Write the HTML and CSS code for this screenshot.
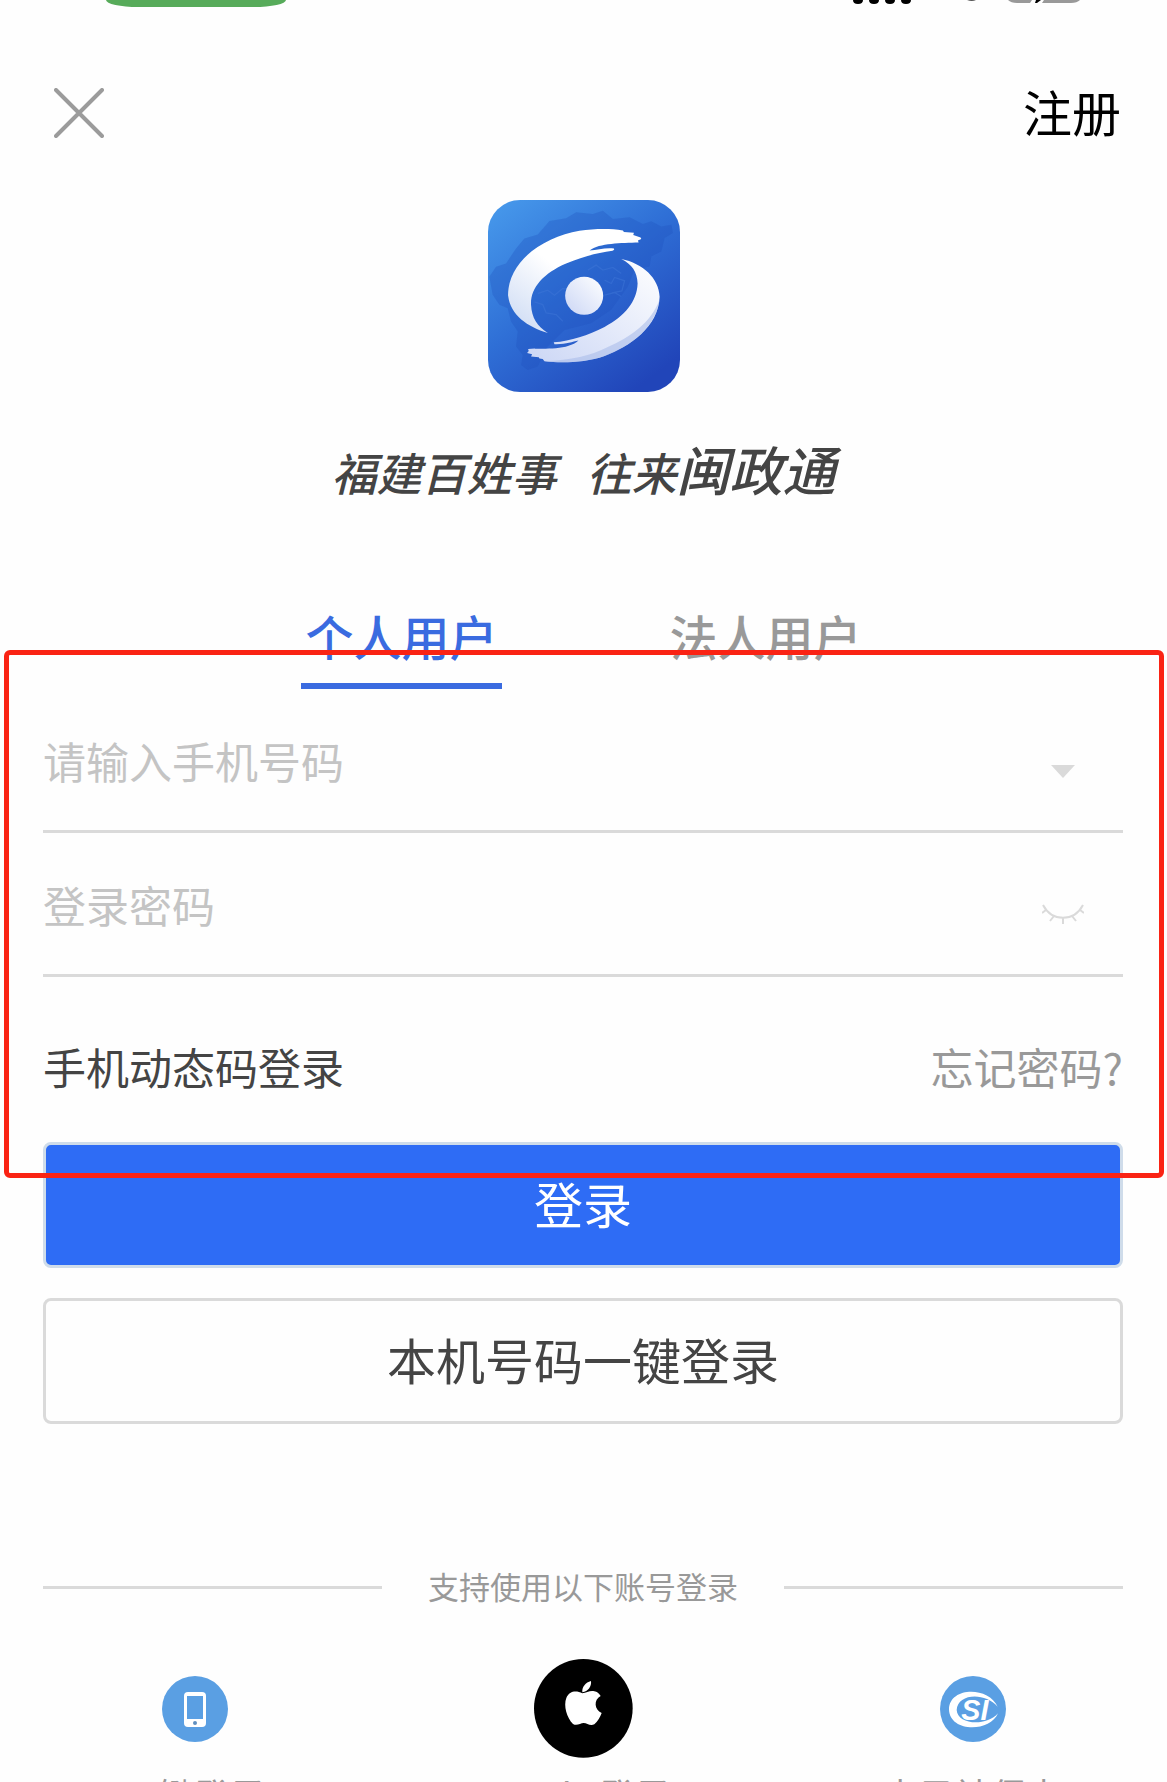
FILE: index.html
```html
<!DOCTYPE html>
<html lang="zh-CN">
<head>
  <meta charset="UTF-8" />
  <meta name="viewport" content="width=device-width, initial-scale=1.0" />
  <title>闽政通 登录</title>
  <link rel="stylesheet" href="styles.css">
</head>

<body>
  <div class="screen">
    <!-- Status bar -->
    <div class="status-bar">
      <span class="call-pill"></span>
      <svg class="status-icons" width="228" height="5" viewBox="0 0 228 5" aria-hidden="true">
        <path d="M0 0h10q0 4-5 4t-5-4zM16 0h10q0 4-5 4t-5-4zM32 0h10q0 4-5 4t-5-4zM48 0h10q0 4-5 4t-5-4z" fill="#000"/>
        <path d="M114 0h9q-4 2-9 0z" fill="#555"/>
        <path d="M155 0h24l-2 3h-13q-6 0-9-3zM191 0h36q-3 3-9 3h-29z" fill="#999"/>
        <path d="M183 0h5l-4 3h-2z" fill="#000"/>
      </svg>
    </div>

    <!-- Top bar -->
    <header class="top-bar">
      <button class="close-btn" type="button" aria-label="关闭">
        <svg width="50" height="50" viewBox="0 0 50 50"><path d="M2 2l46 46M48 2L2 48" stroke="#9b9b9b" stroke-width="4" stroke-linecap="round"/></svg>
      </button>
      <a class="register" href="#">注册</a>
    </header>

    <!-- Brand -->
    <div class="brand">
      <svg class="logo" viewBox="51 60 575 575" aria-hidden="true">
        <defs>
          <linearGradient id="bg" x1="0" y1="0" x2="0.75" y2="1">
            <stop offset="0" stop-color="#489bec"/>
            <stop offset="0.5" stop-color="#2f6fd6"/>
            <stop offset="1" stop-color="#2145b9"/>
          </linearGradient>
          <linearGradient id="top" x1="1" y1="0" x2="0" y2="1">
            <stop offset="0.5" stop-color="#fff"/>
            <stop offset="1" stop-color="#c9d8f3"/>
          </linearGradient>
          <linearGradient id="bottom" x1="1" y1="0" x2="0" y2="1">
            <stop offset="0" stop-color="#fff"/>
            <stop offset="1" stop-color="#cbd6f5"/>
          </linearGradient>
        </defs>
        <rect x="51" y="60" width="575" height="575" rx="96" fill="url(#bg)"/>
        <path d="M55 290l20-30 30-10 30-45 25-30 40-12 35-40 50-8 30-18 50 5 30-10 30 25 50-5 40 20 25-8 30 15 30-5 5 25-25 15-10 40-30 15-5 30-45 10-20 50-50 70-60 40-80 20-50 50-30 60-30 10-20-15 5-30-20-25 5-45-20-30-10-40-25-10-20-30z" fill="#1d4fbe" opacity="0.3"/>
        <path d="M200 340l30-10 20 15 25-20 30 5M350 270l25-15 20 15 30-8 25 18M400 300l20 10 10-18 30 10-8 30-30 6M190 365l25 8 10 25 30 5 20 20M400 345l30-8 20 12" fill="none" stroke="#3d76d8" stroke-width="4" opacity="0.5"/>
        <path d="M230 458C170 440 118 405 111 345C112 240 220 170 325 152C370 146 415 145 455 151L458 156L488 158L486 165L508 172L510 177L500 181L502 187C450 189 385 188 355 211C380 210 400 202 428 205Q431 210 424 212C375 218 330 232 285 250C215 280 177 325 180 375C182 412 198 438 230 458Z" fill="url(#top)"/>
        <path d="M450 237C515 250 563 295 565 350C562 440 475 500 400 527C340 548 270 549 220 543L215 536L205 535L203 531L180 529L183 522L168 518L173 512L171 506C225 505 290 510 322 481C302 485 285 493 250 492L248 486C300 482 350 465 400 440C460 408 497 365 499 310C498 275 482 253 450 237Z" fill="url(#bottom)"/>
        <path d="M564 360C555 440 475 500 400 527C340 548 270 549 220 543C300 540 360 525 410 500C480 470 540 425 564 360Z" fill="#aabce9" opacity="0.6"/>
        <circle cx="339" cy="347" r="57" fill="url(#bottom)"/>
      </svg>
      <p class="slogan">福建百姓事<span class="slogan-gap"></span>往来<span class="slogan-big">闽政通</span></p>
    </div>

    <!-- Account type -->
    <nav class="tabs">
      <button class="tab active" type="button">个人用户</button>
      <button class="tab" type="button">法人用户</button>
    </nav>

    <!-- Login form -->
    <form class="login-form">
      <div class="field">
        <input type="tel" placeholder="请输入手机号码" aria-label="手机号码">
        <button class="field-btn" type="button" aria-label="选择账号">
          <svg width="42" height="20" viewBox="0 0 42 20"><path d="M9 5h24L21 18z" fill="#dadada"/></svg>
        </button>
      </div>
      <div class="field">
        <input type="password" placeholder="登录密码" aria-label="登录密码">
        <button class="field-btn" type="button" aria-label="显示密码">
          <svg width="42" height="20" viewBox="0 0 42 20" fill="none" stroke="#dadada" stroke-width="2"><path d="M1 1C10 18 32 18 41 1M4 6L0 9M12 12L8 17M21 14v6M30 12l4 5M38 6l4 3"/></svg>
        </button>
      </div>

      <div class="links">
        <a class="sms-login" href="#">手机动态码登录</a>
        <a class="forgot" href="#">忘记密码?</a>
      </div>

      <div class="actions">
        <button class="btn btn-primary" type="submit">登录</button>
        <button class="btn" type="button">本机号码一键登录</button>
      </div>

      <div class="highlight"></div>
    </form>

    <!-- Other accounts -->
    <div class="divider"><span>支持使用以下账号登录</span></div>
    <div class="accounts">
      <a class="account" href="#">
        <span class="account-icon">
          <svg width="66" height="66" viewBox="0 0 66 66" aria-hidden="true">
            <circle cx="33" cy="33" r="33" fill="#5a9fe3"/>
            <rect x="22" y="16" width="22" height="35" rx="4" fill="#fff"/>
            <path d="M25 20h16v23H25z" fill="#5a9fe3"/>
            <circle cx="33" cy="47" r="2" fill="#5f8fc0"/>
          </svg>
        </span>
        <span>一键登录</span>
      </a>
      <a class="account" href="#">
        <span class="account-icon">
          <svg width="99" height="99" viewBox="0 0 297 297" aria-hidden="true">
            <circle cx="148" cy="148" r="148" fill="#000"/>
            <path d="M171 66C173 82 162 98 145 100C143 84 155 70 171 66Z" fill="#fff"/>
            <path d="M145 103C158 101 168 94 181 97Q193 99 200 111C178 123 181 152 203 162Q195 184 181 196C168 202 159 192 149 192C139 192 129 202 117 195C98 176 88 140 97 117C107 94 128 95 145 103Z" fill="#fff"/>
          </svg>
        </span>
        <span>Apple 登录</span>
      </a>
      <a class="account" href="#">
        <span class="account-icon">
          <svg width="66" height="66" viewBox="240 108 198 198" aria-hidden="true">
            <circle cx="339" cy="207" r="99" fill="#5a9fe3"/>
            <path d="M413 200C385 138 268 140 267 208C268 278 390 278 414 220C380 260 292 255 290 210C292 160 375 155 413 200Z" fill="#fff"/>
            <text class="si-mark" x="304" y="239">SI</text>
          </svg>
        </span>
        <span>电子社保卡</span>
      </a>
    </div>
  </div>
</body>
</html>
```

FILE: styles.css
```css
* { box-sizing: border-box; }

body {
  margin: 0;
  background: #fefefe;
  color: #444;
  font-family: "Noto Sans CJK SC", sans-serif;
}

a { color: inherit; text-decoration: none; }

button {
  padding: 0;
  border: none;
  background: none;
  color: inherit;
  font-family: inherit;
  cursor: pointer;
}

svg { display: block; }

.screen {
  height: 100vh;
  overflow: hidden;
}

/* ---------- Status bar ---------- */
.status-bar {
  display: flex;
  justify-content: space-between;
  align-items: flex-start;
  height: 8px;
  padding: 0 86px 0 106px;
}
.call-pill {
  width: 180px;
  height: 7px;
  background: #57ab5a;
  border-radius: 0 0 32px 32px / 0 0 7px 7px;
}

/* ---------- Top bar ---------- */
.top-bar {
  display: flex;
  justify-content: space-between;
  align-items: center;
  height: 50px;
  margin: 80px 46px 0 54px;
}
.register {
  padding-bottom: 4px;
  color: #000;
  font-size: 49px;
  line-height: 50px;
}

/* ---------- Brand ---------- */
.brand {
  display: flex;
  flex-direction: column;
  align-items: center;
  padding-top: 62px;
}
.logo { width: 192px; height: 192px; }
.slogan {
  display: flex;
  align-items: baseline;
  height: 64px;
  margin: 44px 0 0;
  font-size: 45px;
  font-weight: 500;
  font-style: italic;
  line-height: 64px;
}
.slogan-gap { width: 30px; }
.slogan-big { font-size: 53px; }

/* ---------- Tabs ---------- */
.tabs {
  display: flex;
  justify-content: center;
  gap: 163px;
  margin-top: 103px;
}
.tab {
  width: 201px;
  padding-bottom: 16px;
  border-bottom: 6px solid transparent;
  color: #999;
  font-size: 48px;
  font-weight: 500;
  line-height: 64px;
}
.tab.active {
  color: #3a6be0;
  border-color: #3a6be0;
}

/* ---------- Login form ---------- */
.login-form {
  position: relative;
  padding: 0 44px 0 43px;
}
.field {
  display: flex;
  align-items: center;
  height: 144px;
  border-bottom: 3px solid #dadada;
}
.field input {
  flex: 1;
  min-width: 0;
  height: 64px;
  padding: 0;
  border: none;
  outline: none;
  background: none;
  font-family: inherit;
  font-size: 43px;
}
.field input::placeholder { color: #c4c4c4; }
.field-btn { padding: 20px 39px 0 0; }
.links {
  display: flex;
  justify-content: space-between;
  padding: 59px 0 46px;
  font-size: 43px;
  line-height: 60px;
}
.forgot { color: #999; }

.actions {
  display: flex;
  flex-direction: column;
  gap: 30px;
}
.btn {
  height: 126px;
  padding-bottom: 5px;
  border: 3px solid #dadada;
  border-radius: 8px;
  font-size: 49px;
}
.btn-primary {
  background: #2e6cf5;
  border-color: #cfdcea;
  color: #fff;
}

/* red frame over the form */
.highlight {
  position: absolute;
  top: -39px;
  right: 3px;
  left: 4px;
  height: 528px;
  border: 5px solid #fa2314;
  border-radius: 6px;
  pointer-events: none;
}

/* ---------- Other accounts ---------- */
.divider {
  display: flex;
  align-items: center;
  gap: 46px;
  margin: 137px 44px 0 43px;
  color: #999;
  font-size: 31px;
  line-height: 50px;
}
.divider span { padding-bottom: 2px; }
.divider::before,
.divider::after {
  content: "";
  flex: 1;
  height: 3px;
  background: #dadada;
}
.accounts {
  display: grid;
  grid-template-columns: repeat(3, 1fr);
  margin-top: 46px;
}
.account {
  display: flex;
  flex-direction: column;
  align-items: center;
  gap: 11px;
  color: #999;
  font-size: 36px;
  line-height: 50px;
}
.account-icon {
  display: flex;
  align-items: center;
  height: 99px;
}
.si-mark {
  fill: #fff;
  font: italic 700 86px "Liberation Sans", sans-serif;
}
```
